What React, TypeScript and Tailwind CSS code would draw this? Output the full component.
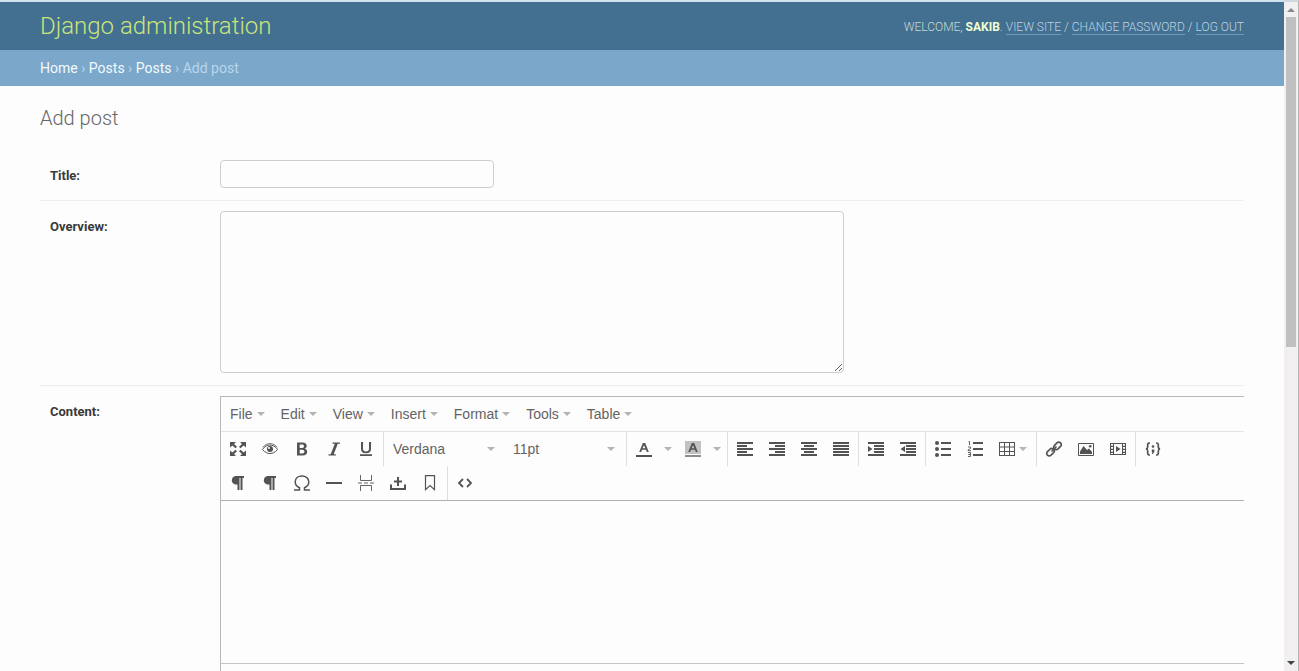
import type { ReactNode } from "react";

function Icon({ children }: { children: ReactNode }) {
  return (
    <svg viewBox="0 0 16 16" className="size-4 shrink-0" fill="currentColor" aria-hidden="true">
      {children}
    </svg>
  );
}

function Caret() {
  return (
    <svg viewBox="0 0 8 4" className="pointer-events-none h-1 w-2 shrink-0 fill-[#b4b4b4]" aria-hidden="true">
      <path d="M0 0h8L4 4z" />
    </svg>
  );
}

const line = { fill: "none", stroke: "currentColor" };

const pilcrow = <path d="M6 1h8v2h-1.500v12h-2V3H9.500v12h-2V9.500H6A4.250 4.250 0 0 1 6 1z" />;

const icons: Record<string, ReactNode> = {
  Fullscreen: (
    <path d="M0 1h6L4 3l3 2.800L5.500 7.200 2.300 4.500 0 6.500zM16 1h-6l2 2-3 2.800 1.500 1.400 3.200-2.700 2.300 2zM0 15h6l-2-2 3-2.800L5.500 8.800l-3.200 2.700-2.300-2zM16 15h-6l2-2-3-2.800 1.500-1.400 3.200 2.700 2.300-2z" />
  ),
  Preview: (
    <>
      <path {...line} d="M.4 8.500C2.500 5.300 5.300 4 8 4s5.500 1.300 7.600 4.500C13 11.500 10.500 12.500 8 12.500S3 11.500.4 8.500z" />
      <path {...line} strokeWidth=".8" d="M.8 6.300C3 3.600 5.500 2.600 8 2.600s5 1 7.200 3.700" />
      <circle cx="8" cy="8" r="3" />
      <circle cx="7" cy="7" r="1" fill="#fff" />
    </>
  ),
  Bold: <path fillRule="evenodd" d="M3 1.500h5.500c2.800 0 4.200 1.300 4.200 3.300 0 1.400-.7 2.400-1.900 2.900 1.500.4 2.400 1.500 2.400 3.100 0 2.400-1.700 3.700-4.600 3.700H3zM5.700 3.500v3.400h2.400c1.300 0 1.900-.7 1.900-1.700s-.6-1.700-1.900-1.700zm0 5.300v3.700h2.600c1.400 0 2.100-.7 2.100-1.900 0-1.100-.7-1.800-2.100-1.800z" />,
  Italic: <path d="M6.500 1.500H14v1.200h-2.200L7.700 13.300h2.100v1.200H2.500v-1.200h2.200L8.800 2.700H6.500z" />,
  Underline: <path d="M3 1h2v6.500c0 1.900 1 2.900 3 2.900s3-1 3-2.900V1h2v6.700c0 3-1.800 4.500-5 4.500S3 10.700 3 7.700zM2 13.200h12v1.800H2z" />,
  "Text color": <path fillRule="evenodd" d="M6.900 2h2.300L12.800 11h-2l-.8-2.200H6L5.200 11h-2zM8 4.300 6.600 7.300h2.800zM0 14h16v2H0z" />,
  "Background color": (
    <>
      <path fill="#c2c2c2" d="M0 0h16v13H0z" />
      <path fillRule="evenodd" d="M6.900 2h2.300L12.800 11h-2l-.8-2.200H6L5.200 11h-2zM8 4.300 6.600 7.300h2.800z" />
      <path fill="#8c8c8c" d="M0 14h16v2H0z" />
    </>
  ),
  "Align left": <path d="M0 1h16v2H0zM0 4h10v2H0zM0 7h16v2H0zM0 10h10v2H0zM0 13h16v2H0z" />,
  "Align right": <path d="M0 1h16v2H0zM6 4h10v2H6zM0 7h16v2H0zM6 10h10v2H6zM0 13h16v2H0z" />,
  "Align center": <path d="M0 1h16v2H0zM3 4h10v2H3zM0 7h16v2H0zM3 10h10v2H3zM0 13h16v2H0z" />,
  Justify: <path d="M0 1h16v2H0zM0 4h16v2H0zM0 7h16v2H0zM0 10h16v2H0zM0 13h16v2H0z" />,
  "Increase indent": <path d="M0 1h16v2H0zM6 4h10v2H6zM6 7h10v2H6zM6 10h10v2H6zM0 13h16v2H0zM0 5l4.500 3L0 11z" />,
  "Decrease indent": <path d="M0 1h16v2H0zM6 4h10v2H6zM6 7h10v2H6zM6 10h10v2H6zM0 13h16v2H0zM5 5 .5 8 5 11z" />,
  "Bullet list": (
    <>
      <path d="M6 1h10v2H6zM6 7h10v2H6zM6 13h10v2H6z" />
      <circle cx="2" cy="2" r="2" />
      <circle cx="2" cy="8" r="2" />
      <circle cx="2" cy="14" r="2" />
    </>
  ),
  "Numbered list": (
    <>
      <path d="M6 1h10v2H6zM6 7h10v2H6zM6 13h10v2H6z" />
      <path {...line} strokeWidth=".9" d="M1.500.5h1V4M1 6h2.500v1.500L1 9v.7h3M1 11.500h2.500v2H1.500h2v2H1" />
    </>
  ),
  Table: <path fillRule="evenodd" d="M0 1h16v14H0zM1 2v3.500h4V2zm5 0v3.500h4V2zm5 0v3.500h4V2zM1 6.500V10h4V6.500zm5 0V10h4V6.500zm5 0V10h4V6.500zM1 11v3h4v-3zm5 0v3h4v-3zm5 0v3h4v-3z" />,
  "Insert link": (
    <g {...line}>
      <rect x="7.300" y="2.400" width="8.400" height="5" rx="2.500" strokeWidth="1.700" transform="rotate(-45 11.500 4.900)" />
      <rect x=".3" y="8.700" width="8.400" height="5" rx="2.500" strokeWidth="1.700" transform="rotate(-45 4.500 11.200)" />
      <path strokeWidth="1.700" strokeLinecap="round" d="M6 10l4-4" />
    </g>
  ),
  "Insert image": (
    <>
      <path {...line} d="M.5 2.500h15v12H.5z" />
      <path d="M2 13v-2.500L5.500 5 9 9l2-1.500 3 3.500v2z" />
      <circle cx="12.200" cy="5.200" r="1.300" />
    </>
  ),
  "Insert video": (
    <path fillRule="evenodd" d="M0 2h16v12H0zM1 3v1.700h2V3zm0 3v1.700h2V6zm0 3v1.700h2V9zm0 3v1h2v-1zM13 3v1.700h2V3zm0 3v1.700h2V6zm0 3v1.700h2V9zm0 3v1h2v-1zM4 3v10h8V3zm2 2 4.500 3L6 11z" />
  ),
  "Code sample": (
    <>
      <path {...line} strokeWidth="1.700" d="M5 2H4.200C3 2 2.700 2.600 2.700 3.700V6c0 1.200-.5 1.800-1.700 2 1.200.2 1.700.8 1.700 2v2.300c0 1.100.3 1.700 1.500 1.700H5M11 2h.8c1.200 0 1.500.6 1.500 1.700V6c0 1.200.5 1.800 1.700 2-1.200.2-1.700.8-1.700 2v2.300c0 1.100-.3 1.700-1.500 1.700H11" />
      <circle cx="8" cy="5.500" r="1.300" />
      <path d="M6.800 8.500h2.500V11L7.800 13H6.700l.8-2h-.7z" />
    </>
  ),
  "Left to right": pilcrow,
  "Right to left": pilcrow,
  "Special character": <path {...line} strokeWidth="1.500" d="M0 15h5.500v-2.300C3 11.500 1.200 9.800 1.200 6.900 1.200 3.300 4.200 1 8 1s6.800 2.300 6.800 5.900c0 2.900-1.800 4.600-4.300 5.800V15H16" />,
  "Horizontal line": <path d="M0 7h16v2H0z" />,
  "Page break": (
    <path {...line} strokeWidth=".9" d="M2.500 0v5.500h11V0M2.500 16v-5.500h11V16M0 8h4M6 8h4M12 8h4" />
  ),
  "Insert file": <path d="M0 9.500h2V13h12V9.500h2V15H0zM7 11V7.500H4v-2h3V2h2v3.500h3v2H9V11z" />,
  Anchor: <path {...line} strokeWidth="1.200" d="M3.500.6h9v14L8 10.600l-4.500 4z" />,
  "Source code": <path {...line} strokeWidth="1.800" d="M6 4 2 8l4 4M10 4l4 4-4 4" />,
};

function Tool({ name, split }: { name: string; split?: "wide" | "narrow" }) {
  const shape =
    split === "wide"
      ? "flex h-[34px] w-[49px] items-center gap-3 pl-2"
      : split === "narrow"
        ? "flex h-[34px] w-[44px] items-center gap-1 pl-2"
        : "flex h-[34px] w-8 items-center justify-center";
  return (
    <button type="button" aria-label={name} className={shape}>
      <Icon>{icons[name]}</Icon>
      {split && <Caret />}
    </button>
  );
}

function Group({ children, last }: { children: ReactNode; last?: boolean }) {
  return <div className={last ? "flex px-px" : "flex border-r border-[#dedede] px-px"}>{children}</div>;
}

function Picker({ label, options }: { label: string; options: string[] }) {
  return (
    <div className="grid w-[120px] items-center">
      <select
        aria-label={label}
        className="col-start-1 row-start-1 h-[34px] w-full appearance-none bg-transparent px-2 text-[14px] text-[#636363]"
      >
        {options.map((o) => (
          <option key={o}>{o}</option>
        ))}
      </select>
      <span className="pointer-events-none col-start-1 row-start-1 mr-2.5 justify-self-end">
        <Caret />
      </span>
    </div>
  );
}

const menus = ["File", "Edit", "View", "Insert", "Format", "Tools", "Table"];

function Editor() {
  return (
    <div className="flex min-w-0 flex-1 flex-col border-t border-l border-[#b8b8bc] font-['Liberation_Sans',Arial,sans-serif] text-[14px] text-[#636363]">
      <div className="flex h-[35px] items-center border-b border-[#e4e4e4] pl-px">
        {menus.map((m) => (
          <button key={m} type="button" className="flex h-7 items-center gap-1 px-2">
            {m}
            <Caret />
          </button>
        ))}
      </div>
      <div className="flex flex-wrap border-b border-[#b0b0b0] text-[#535353]">
        <Group>
          {["Fullscreen", "Preview", "Bold", "Italic", "Underline"].map((n) => <Tool key={n} name={n} />)}
        </Group>
        <Group>
          <Picker label="Font family" options={["Verdana", "Arial", "Georgia"]} />
          <Picker label="Font size" options={["11pt", "12pt", "14pt"]} />
        </Group>
        <Group>
          <Tool name="Text color" split="wide" />
          <Tool name="Background color" split="wide" />
        </Group>
        <Group>
          {["Align left", "Align right", "Align center", "Justify"].map((n) => <Tool key={n} name={n} />)}
        </Group>
        <Group>
          <Tool name="Increase indent" />
          <Tool name="Decrease indent" />
        </Group>
        <Group>
          <Tool name="Bullet list" />
          <Tool name="Numbered list" />
          <Tool name="Table" split="narrow" />
        </Group>
        <Group>
          {["Insert link", "Insert image", "Insert video"].map((n) => <Tool key={n} name={n} />)}
        </Group>
        <Group last>
          <Tool name="Code sample" />
        </Group>
        <div className="flex basis-full">
          <Group>
            {["Left to right", "Right to left", "Special character", "Horizontal line", "Page break", "Insert file", "Anchor"].map((n) => (
              <Tool key={n} name={n} />
            ))}
          </Group>
          <Group last>
            <Tool name="Source code" />
          </Group>
        </div>
      </div>
      <textarea id="content" className="block min-h-24 w-full flex-1 resize-none bg-transparent p-2 outline-none" />
      <div className="h-2 border-t border-[#c4c4c4]" />
    </div>
  );
}

const labelStyle = "w-[170px] shrink-0 pt-2 text-[13px] leading-4 font-bold text-[#3a3a3a]";
const toolLink = "border-b border-[#7397b4] text-[#bdd4e4]";

export default function App() {
  return (
    <div className="flex min-h-screen bg-[#fdfdfd] font-[Roboto,sans-serif]">
      <div className="flex min-w-0 flex-1 flex-col">
        <header className="flex h-[50px] items-center justify-between border-t-2 border-[#cfe3ea] bg-[#436f91] px-10">
          <div className="text-[24px] leading-8 font-light text-[#c9e57a]">Django administration</div>
          <div className="flex items-center gap-[3px] pt-0.5 text-[12px] leading-[14px] font-light text-[#c3dcd0] uppercase">
            <span>
              Welcome, <strong className="font-bold text-[#efffd2]">Sakib</strong>.
            </span>
            <a href="#site" className={toolLink}>View site</a>
            <span>/</span>
            <a href="#password" className={toolLink}>Change password</a>
            <span>/</span>
            <a href="#logout" className={toolLink}>Log out</a>
          </div>
        </header>
        <nav aria-label="Breadcrumbs" className="h-9 bg-[#7aa7ca] px-10 text-[14px] leading-9 text-[#b9d6ea]">
          <a href="#home" className="text-[#f4fafd]">Home</a> › <a href="#app" className="text-[#f4fafd]">Posts</a> ›{" "}
          <a href="#posts" className="text-[#f4fafd]">Posts</a> › Add post
        </nav>
        <main className="flex flex-1 flex-col px-10 pt-5">
          <h1 className="text-[20px] leading-6 font-light text-[#666666]">Add post</h1>
          <form className="mt-5 flex flex-1 flex-col">
            <div className="flex border-b border-[#eeeeee] pt-2.5 pb-3 pl-2.5">
              <label htmlFor="title" className={labelStyle}>Title:</label>
              <input id="title" type="text" className="h-7 w-[274px] rounded border border-[#cfcfd2] bg-transparent px-2" />
            </div>
            <div className="flex border-b border-[#eeeeee] pt-2.5 pb-3 pl-2.5">
              <label htmlFor="overview" className={labelStyle}>Overview:</label>
              <textarea id="overview" className="block h-[162px] w-[624px] rounded border border-[#cfcfd2] bg-transparent p-2" />
            </div>
            <div className="flex flex-1 pt-2.5 pl-2.5">
              <label htmlFor="content" className={labelStyle}>Content:</label>
              <Editor />
            </div>
          </form>
        </main>
      </div>
      <div aria-hidden="true" className="flex w-[15px] shrink-0 flex-col items-center border-t-2 border-r border-t-[#cfd8dc] border-r-[#b4b4b4] bg-[#f1eff0]">
        <div className="flex h-[15px] items-center">
          <svg viewBox="0 0 8 4" className="h-1 w-2 fill-[#8a8a8a]"><path d="M0 4h8L4 0z" /></svg>
        </div>
        <div className="h-[330px] w-2.5 bg-[#c1c0c1]" />
        <div className="mt-auto flex h-4 items-center">
          <svg viewBox="0 0 8 4" className="h-1 w-2 fill-[#444444]"><path d="M0 0h8L4 4z" /></svg>
        </div>
      </div>
    </div>
  );
}
